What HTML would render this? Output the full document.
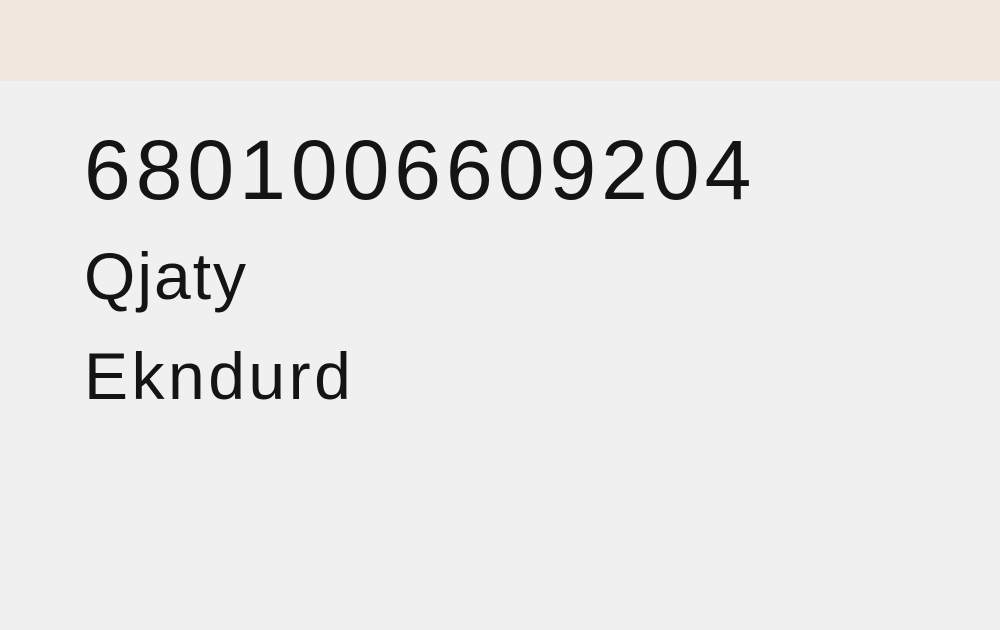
<!DOCTYPE html>
<html><head><meta charset="utf-8"><style>
html,body{margin:0;padding:0;width:1000px;height:630px;overflow:hidden;background:#f0f0f0;font-family:"Liberation Sans",sans-serif;color:#141414}
.top{position:absolute;left:0;top:0;width:1000px;height:81px;background:#f0e6de}
.t{position:absolute;left:84px;white-space:nowrap;line-height:1}
.n{top:128px;font-size:84px;letter-spacing:5px}
.a{top:243px;font-size:66px;letter-spacing:2px}
.b{top:343px;font-size:66px;letter-spacing:3.5px}
</style></head><body>
<div class="top"></div>
<div class="t n">6801006609204</div>
<div class="t a">Qjaty</div>
<div class="t b">Ekndurd</div>
</body></html>
